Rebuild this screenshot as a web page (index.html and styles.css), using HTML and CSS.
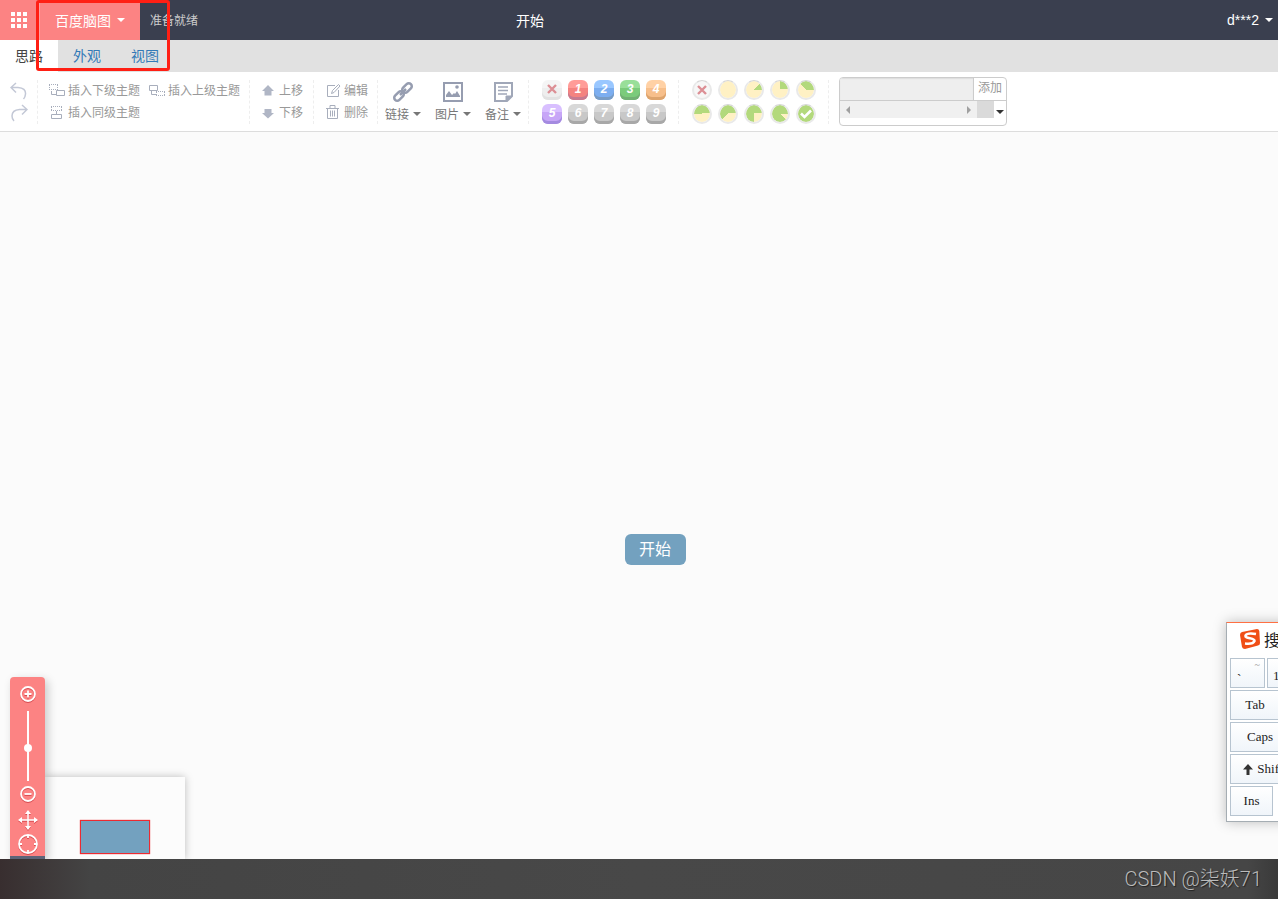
FILE: index.html
```html
<!DOCTYPE html>
<html lang="zh-CN">
<head>
<meta charset="utf-8">
<title>百度脑图</title>
<link rel="stylesheet" href="styles.css">
</head>
<body>
<header class="topbar">
  <button class="apps" aria-label="应用">
    <svg width="16" height="16" viewBox="0 0 16 16" fill="#fff"><path d="M0 0h4v4H0zM6 0h4v4H6zM12 0h4v4h-4zM0 6h4v4H0zM6 6h4v4H6zM12 6h4v4h-4zM0 12h4v4H0zM6 12h4v4H6zM12 12h4v4h-4z"/></svg>
  </button>
  <button class="brand">百度脑图<span class="caret"></span></button>
  <span class="status">准备就绪</span>
  <h1 class="title">开始</h1>
  <button class="user">d***2<span class="caret"></span></button>
</header>

<nav class="tabs">
  <a class="tab active" href="#idea">思路</a>
  <a class="tab" href="#look">外观</a>
  <a class="tab" href="#view">视图</a>
</nav>

<section class="toolbar">
  <div class="group history">
    <button aria-label="撤销"><svg width="18" height="18" viewBox="0 0 18 18" fill="none" stroke="#c3c8d6" stroke-width="1.5"><path d="M6 1 1 5.500l5 5M1.500 5.500H8q8 .5 7.500 6.500-.2 3-2 5"/></svg></button>
    <button aria-label="重做"><svg width="18" height="18" viewBox="0 0 18 18" fill="none" stroke="#c3c8d6" stroke-width="1.5"><path d="m12 1 5 4.500-5 5M16.500 5.500H9.500Q2 6 2 12q0 3 2 5"/></svg></button>
  </div>
  <div class="group insert">
    <button class="tool"><svg width="16" height="14" viewBox="0 0 16 14" fill="none" stroke="#a8aebc"><path stroke-dasharray="1 1" d="M0 1.500h9M.5 2v4M8.500 2v4M0 6.500h9"/><path d="M2.500 8v3.500H7M7.500 7.500h8v5h-8z"/></svg>插入下级主题</button>
    <button class="tool"><svg width="16" height="14" viewBox="0 0 16 14" fill="none" stroke="#a8aebc"><path d="M.5 2.500h8v5h-8zM2.500 8v3.500H7"/><path stroke-dasharray="1 1" d="M7 8.500h9M7.500 9v4M15.500 9v4M7 12.500h9"/></svg>插入上级主题</button>
    <button class="tool"><svg width="16" height="14" viewBox="0 0 16 14" fill="none" stroke="#a8aebc"><path stroke-dasharray="1 1" d="M2 1.500h12M2.500 2v3M12.500 2v3M2 5.500h12"/><path d="M7.500 6v3M2.500 9.500h10v4h-10z"/></svg>插入同级主题</button>
  </div>
  <div class="group arrange">
    <button class="tool"><svg width="16" height="14" viewBox="0 0 16 14" fill="#b0b6c5"><path d="M7 2 13 8h-2.500v4.500h-7V8H1z"/></svg>上移</button>
    <button class="tool"><svg width="16" height="14" viewBox="0 0 16 14" fill="#b0b6c5"><path d="M7 13.500 1 8h2.500V4h7v4H13z"/></svg>下移</button>
  </div>
  <div class="group edit">
    <button class="tool"><svg width="16" height="14" viewBox="0 0 16 14" fill="none" stroke="#a8aebc"><path d="M9 2.500H1.500v11h11V7M5.500 10.500l1-3L12.500 1.500l1.500 1.500-6 6.500z"/></svg>编辑</button>
    <button class="tool"><svg width="16" height="14" viewBox="0 0 16 14" fill="none" stroke="#a8aebc"><path d="M0 3.500h13M4 3V.5h5V3M1.500 4v9.500h10V4M4.500 5.500v6M6.500 5.500v6M8.500 5.500v6"/></svg>删除</button>
  </div>
  <div class="group media">
    <button class="big"><svg width="22" height="22" viewBox="0 0 22 22" fill="none" stroke="#969db0" stroke-width="2.500"><rect x="9.500" y="4" width="11" height="6" rx="3" transform="rotate(-45 15 7)"/><rect x="1.500" y="12" width="11" height="6" rx="3" transform="rotate(-45 7 15)"/><path d="m8 14 6-6"/></svg><span class="label">链接<i class="caret"></i></span></button>
    <button class="big"><svg width="22" height="22" viewBox="0 0 22 22"><path d="M2 2h18v18H2z" fill="#fff" stroke="#969db0" stroke-width="2"/><path d="M4 16v-2l3-4 3 4 2-2 1 1 2-3 3 5v1z" fill="#969db0"/><circle cx="15" cy="6" r="1.800" fill="#969db0"/></svg><span class="label">图片<i class="caret"></i></span></button>
    <button class="big"><svg width="22" height="22" viewBox="0 0 22 22" fill="none" stroke="#a0a7b8"><path stroke-width="2" d="M3 2h17v13l-5 5H3z"/><path stroke-width="1.500" d="M6 6h10M6 9.500h10M6 13h9"/><path d="M14 20v-5h5z" fill="#a0a7b8"/></svg><span class="label">备注<i class="caret"></i></span></button>
  </div>
  <div class="group marks">
    <button class="priority none" aria-label="移除优先级"><svg width="10" height="10" viewBox="0 0 10 10" stroke="#dc8f95" stroke-width="2.400"><path d="m1 1 8 8M9 1 1 9"/></svg></button>
    <button class="priority red">1</button>
    <button class="priority blue">2</button>
    <button class="priority green">3</button>
    <button class="priority orange">4</button>
    <button class="priority purple">5</button>
    <button class="priority">6</button>
    <button class="priority">7</button>
    <button class="priority">8</button>
    <button class="priority">9</button>
  </div>
  <div class="group marks">
    <button class="progress none" aria-label="移除进度"><svg width="10" height="10" viewBox="0 0 10 10" stroke="#dc8f95" stroke-width="2.400"><path d="m1 1 8 8M9 1 1 9"/></svg></button>
    <button class="progress" aria-label="未开始" style="--from:90deg;--span:0deg"></button>
    <button class="progress" aria-label="完成 1/8" style="--from:45deg;--span:45deg"></button>
    <button class="progress" aria-label="完成 2/8" style="--from:0deg;--span:90deg"></button>
    <button class="progress" aria-label="完成 3/8" style="--from:-45deg;--span:135deg"></button>
    <button class="progress" aria-label="完成 4/8" style="--from:-90deg;--span:180deg"></button>
    <button class="progress" aria-label="完成 5/8" style="--from:-135deg;--span:225deg"></button>
    <button class="progress" aria-label="完成 6/8" style="--from:-180deg;--span:270deg"></button>
    <button class="progress" aria-label="完成 7/8" style="--from:-225deg;--span:315deg"></button>
    <button class="progress" aria-label="已完成" style="--from:90deg;--span:360deg"><svg width="12" height="10" viewBox="0 0 12 10" fill="none" stroke="#fff" stroke-width="2.600"><path d="m1 4.500 3.500 3.500L11 1.500"/></svg></button>
  </div>
  <div class="resource">
    <div class="resource-add">
      <input type="text" aria-label="资源名称">
      <button>添加</button>
    </div>
    <div class="resource-list">
      <div class="scroller">
        <button aria-label="向左"><svg width="4" height="8" viewBox="0 0 4 8" fill="#a0a0a0"><path d="M4 0v8L0 4z"/></svg></button>
        <button aria-label="向右"><svg width="4" height="8" viewBox="0 0 4 8" fill="#a0a0a0"><path d="M0 0v8l4-4z"/></svg></button>
      </div>
      <span class="corner"></span>
      <button class="expand" aria-label="展开"><span class="caret"></span></button>
    </div>
  </div>
</section>

<main class="canvas">
  <div class="node">开始</div>

  <div class="minimap"><span class="viewport"></span></div>
  <div class="navigator">
    <button aria-label="放大"><svg width="20" height="20" viewBox="0 0 20 20" fill="none" stroke="#fff" stroke-width="1.800"><circle cx="10" cy="10" r="7"/><path d="M6.500 10h7M10 6.500v7"/></svg></button>
    <input class="zoom" type="range" min="0" max="100" value="53" aria-label="缩放">
    <button aria-label="缩小"><svg width="20" height="20" viewBox="0 0 20 20" fill="none" stroke="#fff" stroke-width="1.800"><circle cx="10" cy="10" r="7"/><path d="M6.500 10h7"/></svg></button>
    <button class="pan" aria-label="拖动"><svg width="20" height="20" viewBox="0 0 20 20" fill="none" stroke="#fff" stroke-width="1.600"><path d="M10 1v18M1 10h18"/><path fill="#fff" stroke="none" d="m10 0 3 4H7zM10 20l3-4H7zM0 10l4-3v6zM20 10l-4-3v6z"/></svg></button>
    <button class="locate" aria-label="定位"><svg width="20" height="20" viewBox="0 0 20 20" fill="none" stroke="#fff" stroke-width="1.800"><circle cx="10" cy="10" r="9"/><path d="M10 1v3M10 16v3M1 10h3M16 10h3"/></svg></button>
    <span class="toggle"></span>
  </div>

  <aside class="keyboard">
    <div class="kb-head">
      <svg width="22" height="20" viewBox="0 0 22 20"><path d="M3 3 18 0q2 0 2.300 2L21 14q0 2-2 2.500L6 20q-2.500 0-3-2L1 6q0-2.500 2-3z" fill="#f04e16"/><path d="M17 5Q8 3.500 6.500 6.500C5.500 10 16 8.500 15.500 12Q14 15.500 6 14.500" fill="none" stroke="#fff" stroke-width="2.600"/></svg>
      <span>搜狗</span>
    </div>
    <div class="kb-row"><button class="key tick">`<sup>~</sup></button><button class="key one">1</button></div>
    <div class="kb-row"><button class="key wide">Tab</button></div>
    <div class="kb-row"><button class="key caps">Caps</button></div>
    <div class="kb-row"><button class="key shift"><svg width="10" height="11" viewBox="0 0 10 11" fill="#333"><path d="m5 0 5 5.500H6.500V11h-3V5.500H0z"/></svg>Shift</button></div>
    <div class="kb-row"><button class="key ins">Ins</button></div>
  </aside>
</main>

<footer class="footer">CSDN @柒妖71</footer>
<div class="highlight"></div>
</body>
</html>
```

FILE: styles.css
```css
* { box-sizing: border-box; }

body {
  margin: 0;
  height: 100vh;
  display: flex;
  flex-direction: column;
  overflow: hidden;
  position: relative;
  background: #fbfbfb;
  font-family: "Liberation Sans", "Noto Sans CJK SC", sans-serif;
  font-size: 12px;
}

button {
  margin: 0;
  padding: 0;
  border: 0;
  background: none;
  color: inherit;
  font: inherit;
  white-space: nowrap;
}

svg { display: block; flex: none; }

.caret {
  display: inline-block;
  border: 4px solid transparent;
  border-top-color: currentColor;
  border-bottom: 0;
}

/* Top bar */
.topbar {
  flex: none;
  display: flex;
  align-items: center;
  height: 40px;
  padding-bottom: 1px;
  background: #3a3f4f;
  color: #fff;
  font-size: 14px;
}

.apps,
.brand {
  display: flex;
  align-items: center;
  justify-content: center;
  align-self: flex-start;
  height: 40px;
  background: #fc8383;
}

.apps {
  width: 40px;
  padding-right: 2px;
  border-right: 1px solid #fda0a0;
}

.brand {
  gap: 6px;
  width: 100px;
  padding-bottom: 1px;
}

.status {
  width: 376px;
  padding-left: 10px;
  color: #ccc;
  font-size: 12px;
}

.title {
  margin: 0;
  font-size: 14px;
  font-weight: 400;
}

.user {
  display: flex;
  align-items: center;
  gap: 6px;
  margin-left: auto;
  padding: 1px 5px 0 0;
}

/* Tabs */
.tabs {
  flex: none;
  display: flex;
  height: 32px;
  background: #e1e1e1;
}

.tab {
  padding: 0 15px;
  color: #337ab7;
  font-size: 14px;
  line-height: 32px;
  text-decoration: none;
}

.tab.active {
  background: #fff;
  color: #444;
}

/* Toolbar */
.toolbar {
  flex: none;
  display: flex;
  align-items: flex-start;
  height: 60px;
  border-bottom: 1px solid #ddd;
  background: #fff;
  color: #999;
}

.group {
  flex: none;
  height: 44px;
  margin-top: 8px;
  border-right: 1px dashed #eee;
}

.history {
  display: flex;
  flex-direction: column;
  gap: 4px;
  width: 38px;
  padding: 2px 0 0 10px;
}

.insert,
.arrange,
.edit {
  display: grid;
  grid-auto-rows: 22px;
  justify-content: start;
  column-gap: 9px;
}

.insert {
  grid-template-columns: auto auto;
  width: 212px;
  padding-left: 11px;
}

.arrange,
.edit {
  width: 64px;
  padding-left: 11px;
}

.edit { padding-left: 12px; }

.tool {
  display: flex;
  align-items: center;
  gap: 3px;
  height: 18px;
}

.tool svg { margin-top: 2px; }

.arrange .tool,
.edit .tool { gap: 2px; }

.media {
  display: flex;
  width: 151px;
  color: #777;
}

.big {
  display: flex;
  flex-direction: column;
  align-items: center;
  gap: 2px;
  width: 50px;
  padding-top: 1px;
}

.label {
  display: flex;
  align-items: center;
  gap: 4px;
}

.marks {
  display: grid;
  grid-template-columns: repeat(5, 20px);
  grid-auto-rows: 20px;
  gap: 4px 6px;
  width: 150px;
  padding-left: 13px;
}

.priority {
  display: flex;
  align-items: center;
  justify-content: center;
  padding-bottom: 3px;
  border-radius: 6px;
  background: linear-gradient(#d8d8d8 0 8px, #c8c8c8 8px);
  box-shadow: inset 0 -3px #a8a8a8;
  color: #fff;
  font-size: 12px;
  font-style: italic;
  font-weight: 700;
  line-height: 14px;
}

.priority.none {
  background: linear-gradient(#f5f5f5 0 8px, #eee 8px);
  box-shadow: inset 0 -3px #e2e2e2;
}
.priority.red { background: linear-gradient(#ff9c98 0 8px, #f48380 8px); box-shadow: inset 0 -3px #c67b91; }
.priority.blue { background: linear-gradient(#99c7ff 0 8px, #7caef0 8px); box-shadow: inset 0 -3px #789cc5; }
.priority.green { background: linear-gradient(#99df99 0 8px, #7bcb7b 8px); box-shadow: inset 0 -3px #72b074; }
.priority.orange { background: linear-gradient(#ffd1a5 0 8px, #f7bf8b 8px); box-shadow: inset 0 -3px #dda46d; }
.priority.purple { background: linear-gradient(#d8bfff 0 8px, #c7a6f7 8px); box-shadow: inset 0 -3px #a48be0; }

.progress {
  display: flex;
  align-items: center;
  justify-content: center;
  border: 2px solid #e9e9e9;
  border-top: 1px solid #d6d6d6;
  border-radius: 50%;
  background: conic-gradient(from var(--from), #b3d97c var(--span), #fff1c4 var(--span)) padding-box;
}

.progress.none { background: #f7f7f7; }

/* Resource box */
.resource {
  width: 168px;
  height: 49px;
  margin: 5px 0 0 10px;
  border: 1px solid #ccc;
  border-radius: 4px;
  overflow: hidden;
}

.resource-add {
  display: flex;
  height: 23px;
  border-bottom: 1px solid #ccc;
}

.resource-add input {
  flex: 1;
  min-width: 0;
  border: 0;
  border-right: 1px solid #ccc;
  background: #eee;
  box-shadow: inset 0 1px 1px #ddd;
}

.resource-add button {
  width: 32px;
  line-height: 18px;
  padding-bottom: 2px;
}

.resource-list {
  display: flex;
  height: 17px;
}

.scroller {
  flex: 1;
  display: flex;
  justify-content: space-between;
  padding: 0 6px;
  background: #f0f0f0;
}

.corner {
  width: 17px;
  background: #dadada;
}

.expand {
  width: 12px;
  color: #333;
}

/* Canvas */
.canvas {
  flex: 1;
  position: relative;
  overflow: hidden;
}

.node {
  position: absolute;
  left: 625px;
  top: 402px;
  padding: 1px 15px 0 14px;
  border-radius: 6px;
  background: #73a1bf;
  color: #fff;
  font-size: 16px;
  line-height: 30px;
}

.minimap {
  position: absolute;
  left: 45px;
  bottom: 0;
  width: 140px;
  height: 82px;
  padding: 43px 0 0 35px;
  background: #fcfcfc;
  box-shadow: 0 0 8px rgba(0, 0, 0, .25);
}

.viewport {
  display: block;
  width: 70px;
  height: 34px;
  border: 1px solid #ed2a30;
  background: #73a1bf;
  box-shadow: 0 0 1px #ed2a30;
}

.navigator {
  position: absolute;
  left: 10px;
  bottom: 0;
  display: flex;
  flex-direction: column;
  align-items: center;
  width: 35px;
  height: 182px;
  padding-top: 7px;
  border-radius: 4px 4px 0 0;
  background: #fc8383;
  box-shadow: 3px 3px 10px rgba(0, 0, 0, .2);
}

.navigator svg { filter: drop-shadow(0 1px 0 #d84b50); }

.zoom {
  appearance: none;
  writing-mode: vertical-lr;
  width: 8px;
  height: 70px;
  margin: 7px 0 3px;
  background: linear-gradient(#fff, #fff) center / 2px 100% no-repeat;
}

.zoom::-webkit-slider-thumb {
  appearance: none;
  width: 8px;
  height: 8px;
  border-radius: 50%;
  background: #fff;
}

.pan { margin-top: 6px; }
.locate { margin-top: 4px; }

.toggle {
  align-self: stretch;
  flex: none;
  height: 3px;
  margin-top: auto;
  background: #5d6478;
}

/* On-screen keyboard */
.keyboard {
  position: absolute;
  left: calc(100% - 52px);
  top: 490px;
  width: 480px;
  padding: 0 3px 5px;
  border: 1px solid #a5adb3;
  border-top-color: #ff7043;
  background: #fff;
  box-shadow: 0 0 12px rgba(0, 0, 0, .25);
  color: #222;
  font-family: "Liberation Serif", serif;
  font-size: 13px;
}

.kb-head {
  display: flex;
  align-items: center;
  gap: 3px;
  height: 35px;
  padding: 0 0 3px 9px;
  font-family: "Noto Sans CJK SC", sans-serif;
  font-size: 16px;
}

.kb-row {
  display: flex;
  gap: 2px;
  margin-bottom: 2px;
}

.kb-row:last-child { margin-bottom: 0; }

.key {
  display: flex;
  align-items: center;
  justify-content: center;
  gap: 4px;
  width: 35px;
  height: 30px;
  border: 1px solid #b7c4d0;
  background: linear-gradient(#fff, #f0f5fa);
}

.tick { align-items: flex-end; justify-content: space-between; padding: 0 4px 0 6px; }
.tick sup { align-self: flex-start; color: #999; font-size: 10px; line-height: 12px; }
.one { align-items: flex-end; justify-content: flex-start; padding: 0 0 3px 5px; }
.wide { width: 50px; }
.caps { width: 60px; }
.shift { width: 66px; }
.ins { width: 43px; }

/* Footer */
.footer {
  flex: none;
  height: 40px;
  padding-right: 16px;
  background: linear-gradient(90deg, #382e2f, #444 90px, #484848 50%, #464646 calc(100% - 30px), #3a3a3a);
  color: #bbb;
  font-family: Roboto, "Noto Sans CJK SC", sans-serif;
  font-size: 20px;
  font-weight: 300;
  line-height: 40px;
  text-align: right;
  text-shadow: 1px 1px 1px #222;
}

/* Annotation frame drawn over the header */
.highlight {
  position: absolute;
  left: 36px;
  top: 0;
  width: 134px;
  height: 71px;
  border: 3px solid #ff1f14;
  border-radius: 3px;
  pointer-events: none;
}
```
